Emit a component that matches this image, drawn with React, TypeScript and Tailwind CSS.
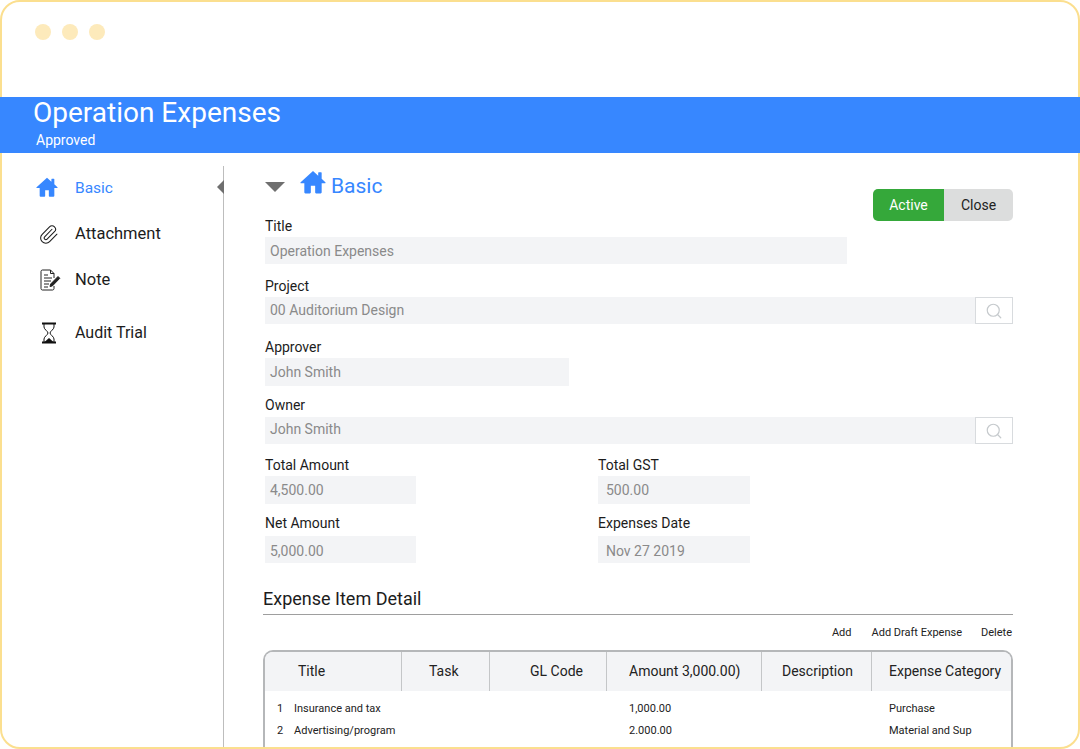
import { Paperclip, Search } from 'lucide-react';

const columns = [
  { label: 'Title', width: 'w-[137px]', pad: 'pl-[33px]' },
  { label: 'Task', width: 'w-[88px]', pad: 'pl-[27px]' },
  { label: 'GL Code', width: 'w-[117px]', pad: 'pl-[40px]' },
  { label: 'Amount 3,000.00)', width: 'w-[155px]', pad: 'pl-[22px]' },
  { label: 'Description', width: 'w-[110px]', pad: 'pl-[20px]' },
  { label: 'Expense Category', width: 'flex-1', pad: 'pl-[17px]' },
];

const rows = [
  { no: '1', title: 'Insurance and tax', amount: '1,000.00', category: 'Purchase' },
  { no: '2', title: 'Advertising/program', amount: '2.000.00', category: 'Material and Sup' },
];

function HomeIcon({ size, className }: { size: number; className?: string }) {
  return (
    <svg width={size} height={size} viewBox="0 0 24 22" fill="#3787ff" className={className}>
      <path d="M12 .8L.6 11.200c-.4.400-.1 1 .4 1H4v8.300c0 .6.400 1 1 1h4.200c.4 0 .8-.4.8-.8v-6.200h4v6.200c0 .4.400.8.800.8H19c.6 0 1-.4 1-1v-8.300h3c.5 0 .8-.6.400-1L20 8.100V2.600c0-.3-.2-.5-.5-.5h-2.200c-.3 0-.5.2-.5.5v2.600z" />
    </svg>
  );
}

function NoteIcon() {
  return (
    <svg width="22" height="22" viewBox="0 0 22 22" fill="none" stroke="#222" strokeWidth="1">
      <path d="M15 9V4.500L11.500 1H3.400C2.600 1 2 1.600 2 2.400v17.200c0 .8.600 1.400 1.400 1.400h10.200c.8 0 1.400-.6 1.400-1.400V17" />
      <path d="M11.500 1v3.500H15" />
      <path d="M5 6h4M5 9h8M5 12h7M5 15h5M5 18h4" />
      <path d="M11 17.500l.6-2.400 7.400-7.600 1.800 1.800-7.400 7.600z" fill="#222" />
    </svg>
  );
}

function HourglassIcon() {
  return (
    <svg width="16" height="22" viewBox="0 0 16 22" fill="none" stroke="#111" strokeWidth="1">
      <path d="M1 1.500h14M1 20.500h14" strokeWidth="1.800" />
      <path d="M3 2v3c0 2.400 4 4.300 4 6s-4 3.600-4 6v3M13 2v3c0 2.400-4 4.300-4 6s4 3.600 4 6v3" />
      <path d="M3.500 20L8 16l4.500 4z" fill="#111" stroke="none" />
    </svg>
  );
}

function Field({
  label,
  value,
  width,
  search,
  height = 'h-[27px]',
  pad = 'pl-[5px]',
  labelClass = 'h-[21px]',
  className,
}: {
  label: string;
  value: string;
  width: string;
  search?: boolean;
  height?: string;
  pad?: string;
  labelClass?: string;
  className?: string;
}) {
  return (
    <div className={className}>
      <div className={`${labelClass} text-[14px] leading-[20px] text-[#1c1c1c]`}>{label}</div>
      <div className="flex">
        <div className={`${width} ${height} ${pad} flex items-center bg-[#f3f4f6] text-[14px] text-[#8a8a8a]`}>{value}</div>
        {search && (
          <div className="ml-auto flex h-[27px] w-[38px] items-center justify-center border border-[#d8dbde] text-[#c6cacd]">
            <Search size={18} strokeWidth={1.6} />
          </div>
        )}
      </div>
    </div>
  );
}

export default function App() {
  return (
    <div className="h-[749px] w-[1080px] rounded-[20px] border-2 border-[#fbdf8f] bg-white font-['Roboto',sans-serif]">
      <div className="flex h-[95px] gap-[11px] pl-[33px] pt-[22px]">
        <span className="h-4 w-4 rounded-full bg-[#fdeabb]" />
        <span className="h-4 w-4 rounded-full bg-[#fdeabb]" />
        <span className="h-4 w-4 rounded-full bg-[#fdeabb]" />
      </div>

      <div className="-mx-[2px] h-[56px] bg-[#3787ff] pl-[33px] text-white">
        <div className="text-[28px] font-[450] leading-[32px]">Operation Expenses</div>
        <div className="pl-[3px] pt-[2px] text-[14px] leading-[18px]">Approved</div>
      </div>

      <div className="flex">
        <aside className="relative mt-[13px] h-[581px] w-[222px] shrink-0 border-r border-[#bdbdbd] pl-[34px]">
          <div className="absolute -right-px top-[14px] h-0 w-0 border-y-[7px] border-r-[7px] border-y-transparent border-r-[#6f6f6f]" />
          <div className="mt-[13px] flex h-[20px] items-center text-[15.500px] text-[#3787ff]">
            <span className="flex w-[39px]"><HomeIcon size={22} className="-mt-[4px]" /></span>
            Basic
          </div>
          <div className="mt-[25px] flex h-[20px] items-center text-[16.500px] text-[#1c1c1c]">
            <span className="flex w-[39px] pl-[2px]"><Paperclip size={21} strokeWidth={1.2} /></span>
            Attachment
          </div>
          <div className="mt-[26px] flex h-[20px] items-center text-[16.500px] text-[#1c1c1c]">
            <span className="flex w-[39px] pl-[3px]"><NoteIcon /></span>
            Note
          </div>
          <div className="mt-[33px] flex h-[20px] items-center text-[16px] text-[#1c1c1c]">
            <span className="flex w-[39px] pl-[5px]"><HourglassIcon /></span>
            Audit Trial
          </div>
        </aside>

        <main className="ml-[40px] w-[749px] pl-[1px]">
          <div className="relative flex h-[63px] items-start pt-[18px]">
            <span className="mr-[15px] mt-[11px] h-0 w-0 border-x-[10px] border-t-[10px] border-x-transparent border-t-[#6f6f6f]" />
            <HomeIcon size={26} className="-mt-[2px]" />
            <span className="ml-[5px] text-[21px] leading-[30px] text-[#3787ff]">Basic</span>
            <div className="absolute right-0 top-[36px] flex h-[32px] overflow-hidden rounded-[5px] text-[14px] leading-[32px]">
              <span className="w-[71px] bg-[#35a83a] text-center text-white">Active</span>
              <span className="w-[69px] bg-[#dcdddd] text-center text-[#222]">Close</span>
            </div>
          </div>

          <Field label="Title" value="Operation Expenses" width="w-[582px]" pad="pl-[5px] pt-[2px]" />
          <Field label="Project" value="00 Auditorium Design" width="w-[710px]" search className="mt-[12px]" />
          <Field label="Approver" value="John Smith" width="w-[304px]" height="h-[28px]" className="mt-[13px]" />
          <Field label="Owner" value="John Smith" width="w-[710px]" search pad="pl-[5px] pb-[3px]" labelClass="-mt-px h-[22px]" className="mt-[10px]" />
          <div className="mt-[11px] grid grid-cols-[333px_1fr] gap-y-[11px]">
            <Field label="Total Amount" value="4,500.00" width="w-[151px]" height="h-[28px]" />
            <Field label="Total GST" value="500.00" width="w-[152px]" height="h-[28px]" pad="pl-[8px]" />
            <Field label="Net Amount" value="5,000.00" width="w-[151px]" pad="pl-[5px] pt-[3px]" labelClass="-mt-[2px] h-[23px]" />
            <Field label="Expenses Date" value="Nov 27 2019" width="w-[152px]" pad="pl-[8px] pt-[3px]" labelClass="-mt-[2px] h-[23px]" />
          </div>

          <div className="-ml-[2px] mt-[24px] border-b border-[#9e9e9e] pb-[3px] text-[18px] leading-[24px] text-[#1c1c1c]">Expense Item Detail</div>
          <div className="flex h-[35px] items-center justify-end pr-[1px] pt-[2px] text-[11px] text-[#222]">
            <span>Add</span>
            <span className="ml-[20px]">Add Draft Expense</span>
            <span className="ml-[19px]">Delete</span>
          </div>

          <div className="-ml-[2px] h-[97px] overflow-hidden rounded-t-[10px] border-x-2 border-t-2 border-[#b5b7b9]">
            <div className="flex h-[39px] bg-[#f3f4f6] text-[14px] leading-[39px] text-[#222]">
              {columns.map((col, i) => (
                <div key={col.label} className={`${col.width} ${col.pad} whitespace-nowrap ${i < 5 ? 'border-r border-[#c4c6c8]' : ''}`}>
                  {col.label}
                </div>
              ))}
            </div>
            <div className="pt-[7px] text-[11px] leading-[22px] text-[#222]">
              {rows.map((row) => (
                <div key={row.no} className="flex">
                  <span className="w-[29px] pl-[12px]">{row.no}</span>
                  <span className="w-[335px]">{row.title}</span>
                  <span className="w-[260px]">{row.amount}</span>
                  <span>{row.category}</span>
                </div>
              ))}
            </div>
          </div>
        </main>
      </div>
    </div>
  );
}
